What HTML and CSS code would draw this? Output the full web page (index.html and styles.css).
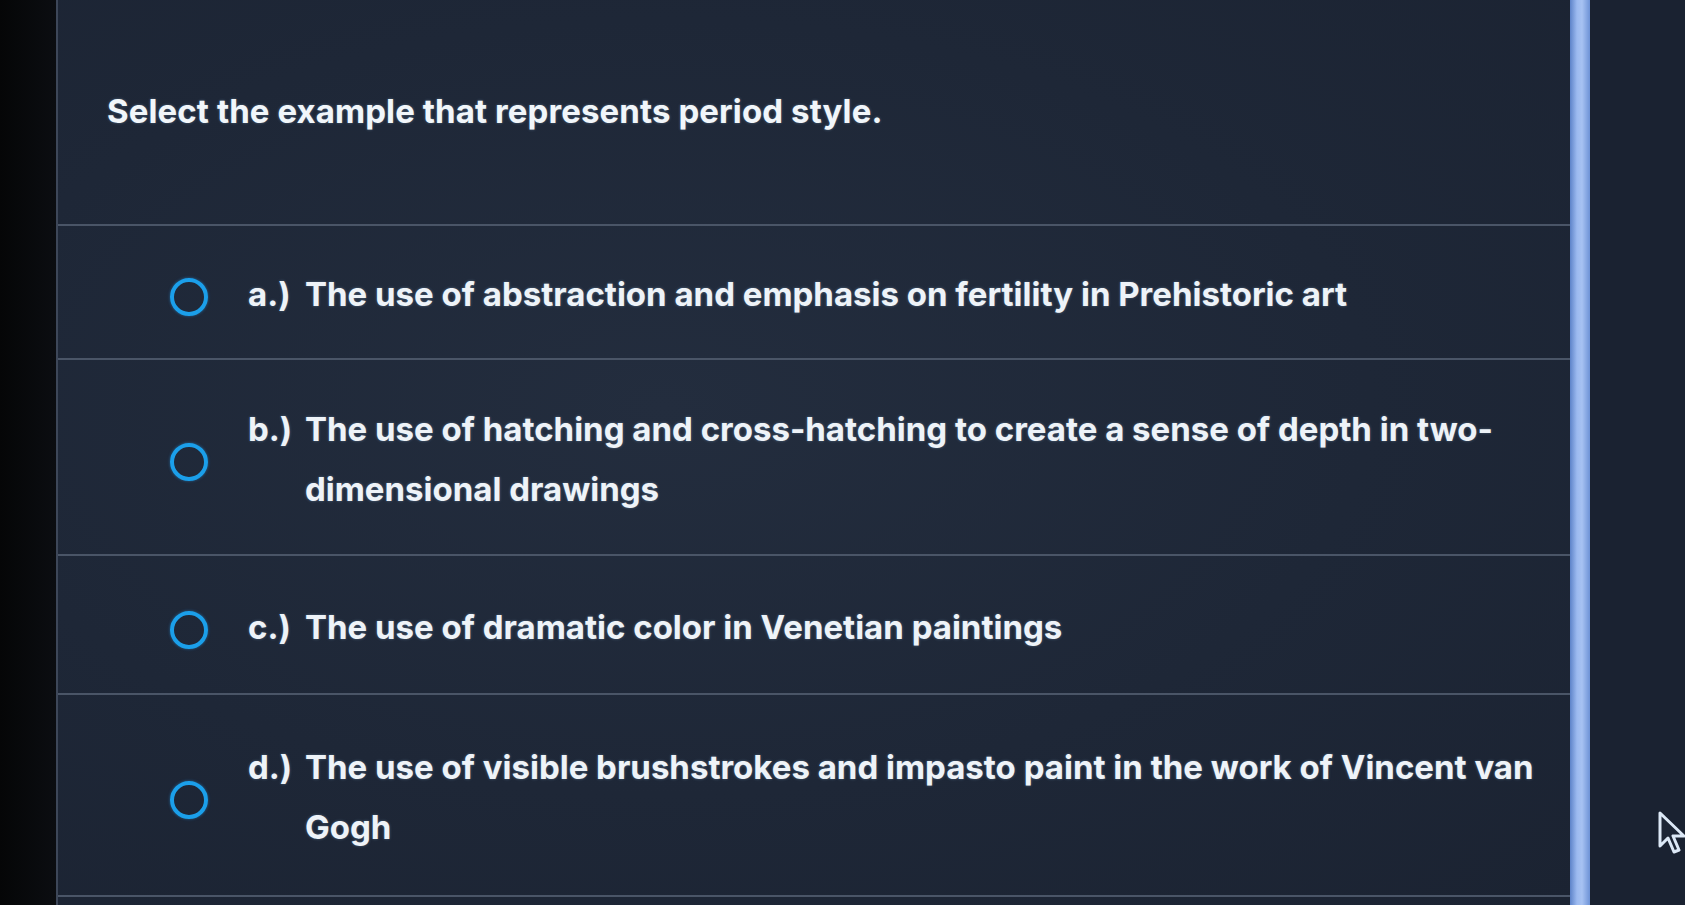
FILE: index.html
```html
<!DOCTYPE html>
<html lang="en">
<head>
<meta charset="utf-8">
<title>Period style question</title>
<link rel="stylesheet" href="styles.css">
</head>
<body>
  <div class="left-strip"></div>
  <main class="panel">
    <header class="header">
      <h1 class="title">Select the example that represents period style.</h1>
    </header>
    <div class="option row-a">
      <span class="radio"></span>
      <div class="answer">
        <span class="label">a.)</span>
        <span class="text">The use of abstraction and emphasis on fertility in Prehistoric art</span>
      </div>
    </div>
    <div class="option row-b">
      <span class="radio"></span>
      <div class="answer">
        <span class="label">b.)</span>
        <span class="text">The use of hatching and cross-hatching to create a sense of depth in two-dimensional drawings</span>
      </div>
    </div>
    <div class="option row-c">
      <span class="radio"></span>
      <div class="answer">
        <span class="label">c.)</span>
        <span class="text">The use of dramatic color in Venetian paintings</span>
      </div>
    </div>
    <div class="option row-d">
      <span class="radio"></span>
      <div class="answer">
        <span class="label">d.)</span>
        <span class="text">The use of visible brushstrokes and impasto paint in the work of Vincent van Gogh</span>
      </div>
    </div>
  </main>
  <div class="scrollbar"></div>
  <aside class="right-area">
    <svg class="cursor" width="30" height="46" viewBox="0 0 30 46">
      <path d="M3 3 L3 36 L11 28 L17 42 L22 40 L16 26 L27 26 Z" fill="#1c2535" stroke="#dce8f6" stroke-width="3" stroke-linejoin="round"/>
    </svg>
  </aside>
</body>
</html>
```

FILE: styles.css
```css
html, body {
  margin: 0;
  padding: 0;
}

body {
  width: 1685px;
  height: 905px;
  overflow: hidden;
  display: flex;
  background: #07080a;
  font-family: Inter, "Noto Sans", "Liberation Sans", sans-serif;
  color: #eef3f8;
}

.left-strip {
  width: 56px;
  flex: none;
  background: linear-gradient(90deg, #050607 0%, #0b0d11 100%);
}

.panel {
  width: 1512px;
  flex: none;
  display: flex;
  flex-direction: column;
  background: radial-gradient(ellipse at 40% 45%, #232d3e 0%, #1e2737 55%, #1b2332 100%);
  border-left: 2px solid #3d4759;
}

.header {
  height: 224px;
  border-bottom: 2px solid #4a5567;
  box-sizing: content-box;
}

.title {
  margin: 0;
  padding: 91px 0 0 49px;
  font-size: 33px;
  line-height: 40px;
  font-weight: 700;
  letter-spacing: 0.1px;
  color: #f1f6fa;
  text-shadow: 0 0 3px rgba(170, 215, 255, 0.35);
}

.option {
  display: flex;
  align-items: center;
  padding-left: 112px;
  padding-top: 4px;
  border-bottom: 2px solid #4a5567;
  box-sizing: border-box;
}

.row-a { height: 134px; }
.row-b { height: 196px; }
.row-c { height: 139px; }
.row-d { height: 202px; }

.radio {
  flex: none;
  width: 30px;
  height: 30px;
  border: 4.5px solid #1b9fea;
  border-radius: 50%;
  margin-top: 6px;
  box-shadow: 0 0 3px rgba(40, 170, 255, 0.5);
}

.answer {
  display: flex;
  margin-left: 40px;
  font-size: 33px;
  line-height: 60px;
  font-weight: 700;
  letter-spacing: 0px;
  color: #eef3f8;
  text-shadow: 0 0 3px rgba(170, 215, 255, 0.35);
}

.label {
  flex: none;
  width: 57px;
}

.text {
  width: 1266px;
}

.scrollbar {
  width: 20px;
  flex: none;
  background: linear-gradient(90deg, #5d83c9 0%, #9cbaf0 35%, #a7c2f2 60%, #6d92d6 100%);
}

.right-area {
  flex: 1;
  position: relative;
  background: #1a2231;
}

.cursor {
  position: absolute;
  left: 67px;
  top: 810px;
}
```
